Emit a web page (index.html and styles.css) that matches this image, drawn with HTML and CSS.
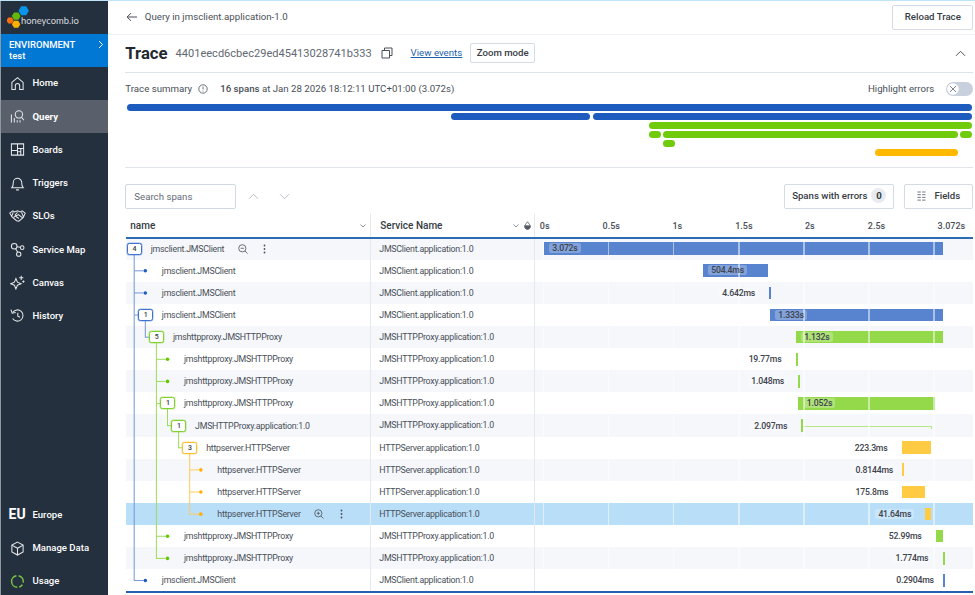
FILE: index.html
```html
<!DOCTYPE html>
<html lang="en">
<head>
  <meta charset="UTF-8">
  <meta name="viewport" content="width=device-width, initial-scale=1.0">
  <title>Trace - Honeycomb</title>
  <link rel="stylesheet" href="styles.css">
</head>
<body>
  <aside class="sidebar">
    <div class="logo">
      <svg class="logo-mark" width="24" height="23" viewBox="0 0 24 23">
        <path fill="#0a95e8" d="M14.200 .3h5l2.700 4.500-2.700 4.500h-5l-2.700-4.500z"/>
        <path fill="#64b80b" d="M7 6.400h4.400l2.200 3.700-2.200 3.700H7l-2.200-3.700z"/>
        <path fill="#f96e10" d="M1.300 11.400h3.600l1.800 3-1.800 3H1.300l-1.800-3z"/>
        <path fill="#ffb000" d="M7 14.800h4.200l2.100 3.500-2.100 3.500H7l-2.100-3.500z"/>
      </svg>
      <span class="logo-text">honeycomb.io</span>
    </div>
    <div class="environment">
      <div>
        <div>ENVIRONMENT</div>
        <div class="env-name">test</div>
      </div>
      <svg width="6" height="9" viewBox="0 0 6 9"><path d="M1 1l3.500 3.500L1 8"/></svg>
    </div>
    <nav class="nav">
      <a class="nav-item">
        <svg viewBox="0 0 16 16"><path d="M2 6.800L8 1.700l6 5.100v7.700h-3.700V10.400a2.300 2.300 0 0 0-4.600 0v4.100H2z"/></svg>
        Home
      </a>
      <a class="nav-item active">
        <svg viewBox="0 0 16 16"><circle cx="9.500" cy="5.800" r="3.900"/><path d="M12.200 8.700l2.700 3.300M1.500 5.800v8.700M4.600 9.500v5M7.700 12v2.500M10.700 12v2.500"/></svg>
        Query
      </a>
      <a class="nav-item">
        <svg viewBox="0 0 16 16"><path d="M1.500 2h13v12h-13zM8 2v12M1.500 9H8M8 7h6.500M8 10.500h3.500M11.500 7v7"/></svg>
        Boards
      </a>
      <a class="nav-item">
        <svg viewBox="0 0 16 16"><path d="M2 12.500c1.300-1.300 1.500-2.600 1.500-5.500a4.500 4.500 0 0 1 9 0c0 2.900.2 4.200 1.500 5.500zM6.500 14.800h3"/></svg>
        Triggers
      </a>
      <a class="nav-item">
        <svg class="wide" viewBox="0 0 18 16"><path d="M.8 5.500L4 3l2 1.300L9 3l3 1.300L14 3l3.200 2.500-2 4.500-4.700 4-2.500-.5-4.500-3.700zM9 4.500L6.500 7.500c1 1.200 2.500.5 3.300-.6l4.700 3.600M5 10l2-1.600 1 1.300 1.500.6.800 1.200M2.500 9.500L4.500 4.500M15.300 9.500L13.300 4.500"/></svg>
        SLOs
      </a>
      <a class="nav-item">
        <svg viewBox="0 0 16 16"><circle cx="4.500" cy="4.500" r="3"/><circle cx="13" cy="6" r="1.900"/><circle cx="9.300" cy="13" r="2.300"/><path d="M7.500 5l3.600.6M6 7.200l2.200 3.700"/></svg>
        Service Map
      </a>
      <a class="nav-item">
        <svg viewBox="0 0 16 16"><path d="M6.300 3.800l1.600 3.900 3.900 1.600L7.900 10.900l-1.600 4-1.600-4L.8 9.300l3.900-1.600zM12 .8v4.400M9.800 3h4.400M14.300 5.800v2.400M13.100 7h2.400"/></svg>
        Canvas
      </a>
      <a class="nav-item">
        <svg viewBox="0 0 16 16"><path d="M3 4.500a6 6 0 1 1-.2 6.700M1 1.800l1.300 3.700 3.800-.6M8.300 5v3.700l2.400 1.200"/></svg>
        History
      </a>
    </nav>
    <nav class="nav nav-bottom">
      <a class="nav-item"><span class="region">EU</span>Europe</a>
      <a class="nav-item">
        <svg viewBox="0 0 16 16"><path d="M8 1.200l6 3.200v7.200l-6 3.400-6-3.400V4.400zM2 4.400l6 3.400 6-3.400M8 7.800V15"/></svg>
        Manage Data
      </a>
      <a class="nav-item">
        <svg class="usage" viewBox="0 0 16 16"><path d="M9.200 1.900a6.200 6.200 0 0 1 4.900 7.200M13.200 11.300a6.200 6.200 0 0 1-3.300 2.600M7.800 14.200A6.200 6.200 0 0 1 6.800 1.900"/></svg>
        Usage
      </a>
    </nav>
  </aside>

  <main class="main">
    <header class="topbar">
      <svg class="icon" width="12" height="10" viewBox="0 0 12 10"><path d="M11 5H1.200M5 1.100L1.100 5 5 8.900"/></svg>
      <span class="crumb">Query in jmsclient.application-1.0</span>
      <button class="btn reload">Reload Trace</button>
    </header>

    <section class="trace-head">
      <h1>Trace</h1>
      <span class="trace-id">4401eecd6cbec29ed45413028741b333</span>
      <svg class="icon copy" width="12" height="12" viewBox="0 0 12 12"><path d="M1 3.500h7.500V11H1zM3.500 3.500V1H11v7.500H8.500"/></svg>
      <a class="view-events">View events</a>
      <button class="btn zoom">Zoom mode</button>
      <svg class="icon collapse" width="11" height="7" viewBox="0 0 11 7"><path d="M1 5.800l4.500-4.500L10 5.800"/></svg>
    </section>

    <section class="summary">
      <div class="summary-head">
        <span>Trace summary</span>
        <svg class="icon info" width="10" height="10" viewBox="0 0 10 10"><circle cx="5" cy="5" r="4.200"/><path d="M5 2.600v2.800M5 6.600v.9"/></svg>
        <span class="summary-text"><b>16 spans</b> at Jan 28 2026 18:12:11 UTC+01:00 (3.072s)</span>
        <span class="highlight">Highlight errors</span>
        <span class="toggle"><svg width="12" height="12" viewBox="0 0 12 12"><circle cx="6" cy="6" r="5.800"/><path d="M3 3l6 6M9 3L3 9"/></svg></span>
      </div>
      <div class="minimap" id="minimap"></div>
    </section>

    <div class="toolbar">
      <div class="search">Search spans</div>
      <svg class="step" width="11" height="7" viewBox="0 0 11 7"><path d="M1 5.800l4.500-4.500L10 5.800"/></svg>
      <svg class="step" width="11" height="7" viewBox="0 0 11 7"><path d="M1 1.200l4.500 4.500L10 1.200"/></svg>
      <button class="btn errors">Spans with errors <span class="count">0</span></button>
      <button class="btn fields">
        <svg width="9" height="10" viewBox="0 0 9 10"><path d="M.5 1h3.300M5.200 1h3.300M.5 3.700h3.300M5.200 3.700h3.300M.5 6.400h3.300M5.200 6.400h3.300M.5 9.100h3.300M5.200 9.100h3.300"/></svg>
        Fields
      </button>
    </div>

    <div class="table">
      <div class="thead">
        <div class="th th-name">name
          <svg class="caret" width="6" height="4" viewBox="0 0 6 4"><path d="M.5.5L3 3 5.500.5"/></svg>
        </div>
        <div class="th th-service">Service Name
          <svg class="caret" width="6" height="4" viewBox="0 0 6 4"><path d="M.5.5L3 3 5.500.5"/></svg>
          <svg class="drop" width="7" height="9" viewBox="0 0 7 9"><path d="M3.500.8C2.300 2.500.8 3.900.8 5.500a2.700 2.700 0 0 0 5.400 0C6.200 3.900 4.700 2.500 3.500.8z" fill="none"/><path d="M.8 4.800h5.400c.2 2-1 3.400-2.700 3.400S.6 6.800.8 4.800z"/></svg>
        </div>
        <div class="ticks">
          <span>0s</span><span>0.5s</span><span>1s</span><span>1.5s</span><span>2s</span><span>2.5s</span><span>3.072s</span>
        </div>
      </div>
      <div class="tbody" id="rows"></div>
    </div>
  </main>

  <script src="trace.js"></script>
</body>
</html>
```
FILE: styles.css
```css
* {
  box-sizing: border-box;
}
body {
  margin: 0;
  width: 975px;
  height: 595px;
  overflow: hidden;
  display: flex;
  border-top: 1px solid #bfe4f8;
  font-family: Roboto, "Liberation Sans", sans-serif;
  font-size: 9.680px;
  color: #4a4f58;
  background: #fff;
}
svg {
  fill: none;
  flex: none;
}

/* sidebar */
.sidebar {
  width: 108.300px;
  flex: none;
  display: flex;
  flex-direction: column;
  background: #25303e;
  border-left: 1px solid #8f979f;
  color: #fff;
}
.logo {
  height: 33px;
  display: flex;
  padding: 5px 0 0 6px;
}
.logo-mark {
  margin-right: -10px;
}
.logo-text {
  font-family: Lato, sans-serif;
  font-size: 9.400px;
  line-height: 12px;
  padding-top: 9px;
  color: #d5dade;
  position: relative;
}
.environment {
  height: 33px;
  padding: 5px 4px 0 8px;
  display: flex;
  justify-content: space-between;
  background: #0278d5;
  font-size: 9.500px;
  font-weight: 500;
  line-height: 11px;
}
.environment svg {
  stroke: #fff;
  margin-top: 1px;
}
.nav-item {
  height: 33.200px;
  display: flex;
  align-items: center;
  padding: 0 0 1px 9px;
  font-size: 9.550px;
  font-weight: 500;
}
.nav-item:first-child {
  padding-bottom: 2px;
}
.nav-item svg {
  width: 15px;
  height: 15px;
  margin: 1px 7.500px 0 0;
  stroke: #e4e7ea;
  stroke-width: 1.100;
}
.nav-item svg.wide {
  width: 17px;
  margin: 0 6.500px 0 -1px;
}
.nav-item svg.usage {
  stroke: #7ac943;
  stroke-width: 1.500;
}
.nav-item.active {
  background: #59606c;
  font-weight: 700;
}
.nav-bottom {
  margin-top: auto;
  margin-bottom: -3px;
}
.region {
  width: 24px;
  margin-left: -1.500px;
  font-size: 14px;
  font-weight: 700;
}

/* top */
.main {
  width: 865px;
  padding-left: 17px;
}
.btn {
  font: 500 9.650px Roboto, sans-serif;
  color: #363b44;
  background: #fff;
  border: 1px solid #d5dbe4;
  border-radius: 2px;
  padding: 0 0 1px;
  display: flex;
  align-items: center;
  justify-content: center;
}
.icon {
  stroke: #4a4f58;
}
.topbar {
  height: 34px;
  display: flex;
  align-items: center;
  margin: 0 -2px 0 -17px;
  padding: 0 2px 1px 17.500px;
  border-bottom: 1px solid #edf1f5;
}
.crumb {
  margin-left: 7px;
  margin-top: -1px;
}
.reload {
  width: 81px;
  height: 25px;
  margin-left: auto;
}
.trace-head {
  height: 38px;
  display: flex;
  align-items: center;
  padding-bottom: 1px;
  border-bottom: 1px solid #dbe2ea;
}
h1 {
  margin: 0;
  font-size: 16.700px;
  font-weight: 700;
  color: #23272f;
}
.trace-id {
  font-size: 11.050px;
  margin-left: 8px;
  color: #626873;
}
.copy {
  margin-left: 9px;
}
.view-events {
  margin-left: 18px;
  margin-top: -1px;
  color: #1e5fae;
  text-decoration: underline;
}
.zoom {
  width: 65px;
  height: 20px;
  margin-left: 8px;
}
.collapse {
  margin-left: auto;
  margin-right: 7px;
}
.summary {
  height: 95px;
  border-bottom: 1px solid #e1e5ea;
}
.summary-head {
  height: 31px;
  display: flex;
  align-items: center;
}
.info {
  margin: 0 12px 0 6px;
  stroke-width: .800;
}
.summary-text b {
  font-weight: 500;
}
.highlight {
  margin-left: auto;
}
.toggle {
  width: 27px;
  height: 14px;
  margin-left: 12px;
  padding: 1px;
  border-radius: 7px;
  background: #c8cfdd;
}
.toggle svg {
  display: block;
}
.toggle circle {
  fill: #fff;
}
.toggle path {
  stroke: #7b828e;
}
.minimap {
  width: 845.500px;
  margin-left: 1.400px;
}
.minimap-row {
  display: flex;
  height: 9px;
}
.minimap-row i {
  height: 7px;
  border-radius: 4px;
}
i.blue { background: #1d5bbf; }
i.green { background: #70cb0c; }
i.orange { background: #ffb900; }

/* toolbar */
.toolbar {
  height: 46px;
  padding-top: 10px;
  display: flex;
  align-items: center;
}
.search {
  width: 111px;
  height: 25px;
  line-height: 23px;
  padding-left: 8px;
  border: 1px solid #d0d8e2;
  border-radius: 2px;
  color: #656b76;
}
.step {
  stroke: #b9bec6;
  margin-left: 12px;
  margin-right: 7.500px;
}
.errors {
  width: 110px;
  height: 25px;
  margin-left: auto;
}
.count {
  width: 15px;
  height: 15px;
  line-height: 15px;
  margin-left: 4px;
  border-radius: 50%;
  background: #e8ebf0;
  font-weight: 700;
}
.fields {
  width: 69px;
  height: 25px;
  margin-left: 10px;
}
.fields svg {
  stroke: #6f7580;
  margin-right: 8px;
  margin-top: 1px;
}

/* span table */
.table {
  margin-left: 1px;
  border-bottom: 2px solid #2560b4;
}
.thead {
  height: 25px;
  display: flex;
  border-bottom: 2px solid #2c6cb3;
}
.th {
  flex: none;
  display: flex;
  align-items: center;
  border-right: 1px solid #e5e8ef;
  font-size: 10px;
  font-weight: 500;
  color: #363b44;
}
.th-name {
  width: 245px;
  padding: 0 4px;
}
.th-service {
  width: 164px;
  padding: 0 3px 0 9px;
}
.caret {
  margin-left: auto;
  stroke: #8c929c;
}
.drop {
  margin-left: 5px;
  stroke: #555b66;
  stroke-width: .800;
}
.drop path:last-child {
  fill: #555b66;
}
.ticks {
  flex: 1;
  min-width: 0;
  display: flex;
  align-items: center;
  padding-left: 4.500px;
  font-size: 9px;
  font-weight: 500;
}
.ticks span {
  width: 66.300px;
  flex: none;
}
.ticks span:nth-child(even) { margin-left: -3.500px; }
.ticks span:nth-child(odd) { margin-left: 3.500px; }
.ticks span:first-child { margin-left: 0; }
.ticks span:last-child { width: auto; }
.tbody {
  position: relative;
  height: 352px;
  overflow: hidden;
}
.row {
  height: 22.120px;
  display: flex;
  font-size: 8.800px;
  letter-spacing: -.24px;
}
.row:first-child {
  margin-top: -1.400px;
}
.row:nth-child(odd) {
  background: #f5f7fb;
}
.row.selected {
  background: #b9def8;
}
.name {
  width: 245px;
  display: flex;
  align-items: center;
  border-right: 1px solid #e5e8ef;
}
.badge {
  z-index: 1;
  width: 15px;
  height: 12px;
  line-height: 10px;
  text-align: center;
  font-size: 7px;
  font-weight: 500;
  border: 1px solid;
  border-radius: 2.500px;
  background: #fff;
}
.badge span { color: #363b44; }
.badge.blue {
  border-color: #3e72cc;
  box-shadow: 0 0 0 .5px #3e72cc80;
}
.badge.green {
  border-color: #7fd22b;
  box-shadow: 0 0 0 .5px #7fd22b80;
}
.badge.orange {
  border-color: #ffbe2e;
  box-shadow: 0 0 0 .5px #ffbe2e80;
}
.label {
  margin-left: 8.700px;
}
.badge-space {
  width: 15px;
}
.row-icon {
  stroke: #5b616c;
  stroke-width: .900;
  margin-left: 13.500px;
}
.dots {
  fill: #4a4f58;
  margin-left: 15.500px;
}
.service {
  width: 164px;
  padding-left: 8px;
  line-height: 22px;
  border-right: 1px solid #e5e8ef;
}
.timeline {
  flex: 1;
  position: relative;
  display: flex;
  align-items: center;
}
/* half second grid, drawn above the bars */
.timeline::after {
  content: "";
  position: absolute;
  inset: 0;
  left: 8px;
  background: repeating-linear-gradient(90deg, rgba(255, 255, 255, .5) 0 1.300px, transparent 1.300px 65.080px);
}
.bar {
  height: 12.700px;
  min-width: 2px;
  flex: none;
}
.bar.blue { background: #5883cf; }
.bar.green { background: #94d94a; }
.bar.orange { background: #ffcb42; }
.time {
  display: block;
  position: relative;
  z-index: 1;
  font-size: 8.700px;
  font-weight: 500;
  letter-spacing: -.2px;
  line-height: 10px;
  color: #3e434c;
}
.bar .time {
  width: max-content;
  margin: 1px 0 0 5.500px;
  padding: 0 3px;
  border-radius: 2px;
  background: rgba(255, 255, 255, .25);
}
.time.outside {
  width: 50px;
  flex: none;
}
.time.outside span {
  padding: 0 3px;
  border-radius: 2px;
  background: rgba(255, 255, 255, .25);
}
.tail {
  height: 3px;
  border-top: 1px solid #b5e684;
  border-right: 1px solid #b5e684;
  margin-top: 4px;
}
.tree {
  position: absolute;
  left: 0;
  top: 0;
}
.tree path.blue { stroke: #7396d8; }
.tree path.green { stroke: #9bdc58; }
.tree path.orange { stroke: #ffcb5a; }
.tree circle.blue { fill: #1d5bbf; }
.tree circle.green { fill: #64c800; }
.tree circle.orange { fill: #ffb000; }
```
FILE: trace.js
```js
const ROW = 22.12;
const INDENT = 11.1;
const PX_PER_SEC = 130;

const services = {
  blue: 'JMSClient.application:1.0',
  green: 'JMSHTTPProxy.application:1.0',
  orange: 'HTTPServer.application:1.0'
};

// start and duration in seconds
const spans = [
  { name: 'jmsclient.JMSClient', color: 'blue', depth: 0, kids: 4, start: 0, dur: 3.072, text: '3.072s', icon: 'minus' },
  { name: 'jmsclient.JMSClient', color: 'blue', depth: 1, start: 1.223, dur: 0.5044, text: '504.4ms' },
  { name: 'jmsclient.JMSClient', color: 'blue', depth: 1, start: 1.735, dur: 0.0046, text: '4.642ms' },
  { name: 'jmsclient.JMSClient', color: 'blue', depth: 1, kids: 1, start: 1.739, dur: 1.333, text: '1.333s' },
  { name: 'jmshttpproxy.JMSHTTPProxy', color: 'green', depth: 2, kids: 5, start: 1.938, dur: 1.132, text: '1.132s' },
  { name: 'jmshttpproxy.JMSHTTPProxy', color: 'green', depth: 3, start: 1.938, dur: 0.0198, text: '19.77ms' },
  { name: 'jmshttpproxy.JMSHTTPProxy', color: 'green', depth: 3, start: 1.958, dur: 0.001, text: '1.048ms' },
  { name: 'jmshttpproxy.JMSHTTPProxy', color: 'green', depth: 3, kids: 1, start: 1.958, dur: 1.052, text: '1.052s' },
  { name: 'JMSHTTPProxy.application:1.0', color: 'green', depth: 4, kids: 1, start: 1.982, dur: 0.0021, text: '2.097ms', tail: 0.988 },
  { name: 'httpserver.HTTPServer', color: 'orange', depth: 5, kids: 3, start: 2.754, dur: 0.2233, text: '223.3ms' },
  { name: 'httpserver.HTTPServer', color: 'orange', depth: 6, start: 2.76, dur: 0.0008, text: '0.8144ms' },
  { name: 'httpserver.HTTPServer', color: 'orange', depth: 6, start: 2.76, dur: 0.1758, text: '175.8ms' },
  { name: 'httpserver.HTTPServer', color: 'orange', depth: 6, start: 2.936, dur: 0.0416, text: '41.64ms', icon: 'plus', selected: true },
  { name: 'jmshttpproxy.JMSHTTPProxy', color: 'green', depth: 3, start: 3.016, dur: 0.053, text: '52.99ms' },
  { name: 'jmshttpproxy.JMSHTTPProxy', color: 'green', depth: 3, start: 3.068, dur: 0.0018, text: '1.774ms' },
  { name: 'jmsclient.JMSClient', color: 'blue', depth: 1, start: 3.074, dur: 0.0003, text: '0.2904ms' }
];

function rowIcons(kind) {
  if (!kind) return '';
  const sign = kind === 'plus' ? 'M2.700 4.300h3.200M4.300 2.700v3.200' : 'M2.700 4.300h3.200';
  return `<svg class="row-icon" width="10" height="10" viewBox="0 0 10 10"><circle cx="4.300" cy="4.300" r="3.600"/><path d="M7 7l2.500 2.500${sign}"/></svg>
    <svg class="dots" width="3" height="10" viewBox="0 0 3 10"><circle cx="1.500" cy="1.500" r=".9"/><circle cx="1.500" cy="5" r=".9"/><circle cx="1.500" cy="8.500" r=".9"/></svg>`;
}

function timeline(s) {
  const left = 8.4 + s.start * PX_PER_SEC;
  const width = s.dur * PX_PER_SEC;
  if (s.dur > 0.4) {
    return `<div class="bar ${s.color}" style="margin-left:${left}px;width:${width}px"><span class="time">${s.text}</span></div>`;
  }
  const tail = s.tail ? `<div class="tail" style="width:${s.tail * PX_PER_SEC}px"></div>` : '';
  return `<div class="time outside" style="margin-left:${left - 50}px"><span>${s.text}</span></div>
    <div class="bar ${s.color}" style="width:${width}px"></div>${tail}`;
}

// connector lines between a parent badge and its children
function tree() {
  let out = '';
  const y = i => i * ROW + 9.7;
  const x = d => 8.2 + d * INDENT;
  spans.forEach((s, i) => {
    if (s.kids) {
      let last = i;
      for (let j = i + 1; j < spans.length && spans[j].depth > s.depth; j++) {
        if (spans[j].depth !== s.depth + 1) continue;
        out += `<path class="${s.color}" d="M${x(s.depth)} ${y(j)}h${INDENT - 2}"/>`;
        last = j;
      }
      out += `<path class="${s.color}" d="M${x(s.depth)} ${y(i)}V${y(last) + 0.5}"/>`;
    } else {
      out += `<circle class="${s.color}" cx="${x(s.depth)}" cy="${y(i)}" r="1.800"/>`;
    }
  });
  return `<svg class="tree" width="245" height="352">${out}</svg>`;
}

document.getElementById('rows').innerHTML = spans.map(s => `
  <div class="row${s.selected ? ' selected' : ''}">
    <div class="name" style="padding-left:${0.7 + s.depth * INDENT}px">
      ${s.kids ? `<div class="badge ${s.color}"><span>${s.kids}</span></div>` : '<div class="badge-space"></div>'}
      <span class="label">${s.name}</span>${rowIcons(s.icon)}
    </div>
    <div class="service">${services[s.color]}</div>
    <div class="timeline">${timeline(s)}</div>
  </div>`).join('') + tree();

// [color, gap before, width] in percent of the whole trace
const minimap = [
  [['blue', 0, 100]],
  [['blue', 38.4, 16.45], ['blue', 0.25, 44.9]],
  [['green', 61.8, 38.2]],
  [['green', 61.8, 1.4], ['green', 0.2, 34.9], ['green', 0.3, 1.4]],
  [['green', 63.4, 1.4]],
  [['orange', 88.5, 9.8]]
];
document.getElementById('minimap').innerHTML = minimap.map(row =>
  `<div class="minimap-row">${row.map(b =>
    `<i class="${b[0]}" style="margin-left:${b[1]}%;width:${b[2]}%"></i>`).join('')}</div>`).join('');
```
